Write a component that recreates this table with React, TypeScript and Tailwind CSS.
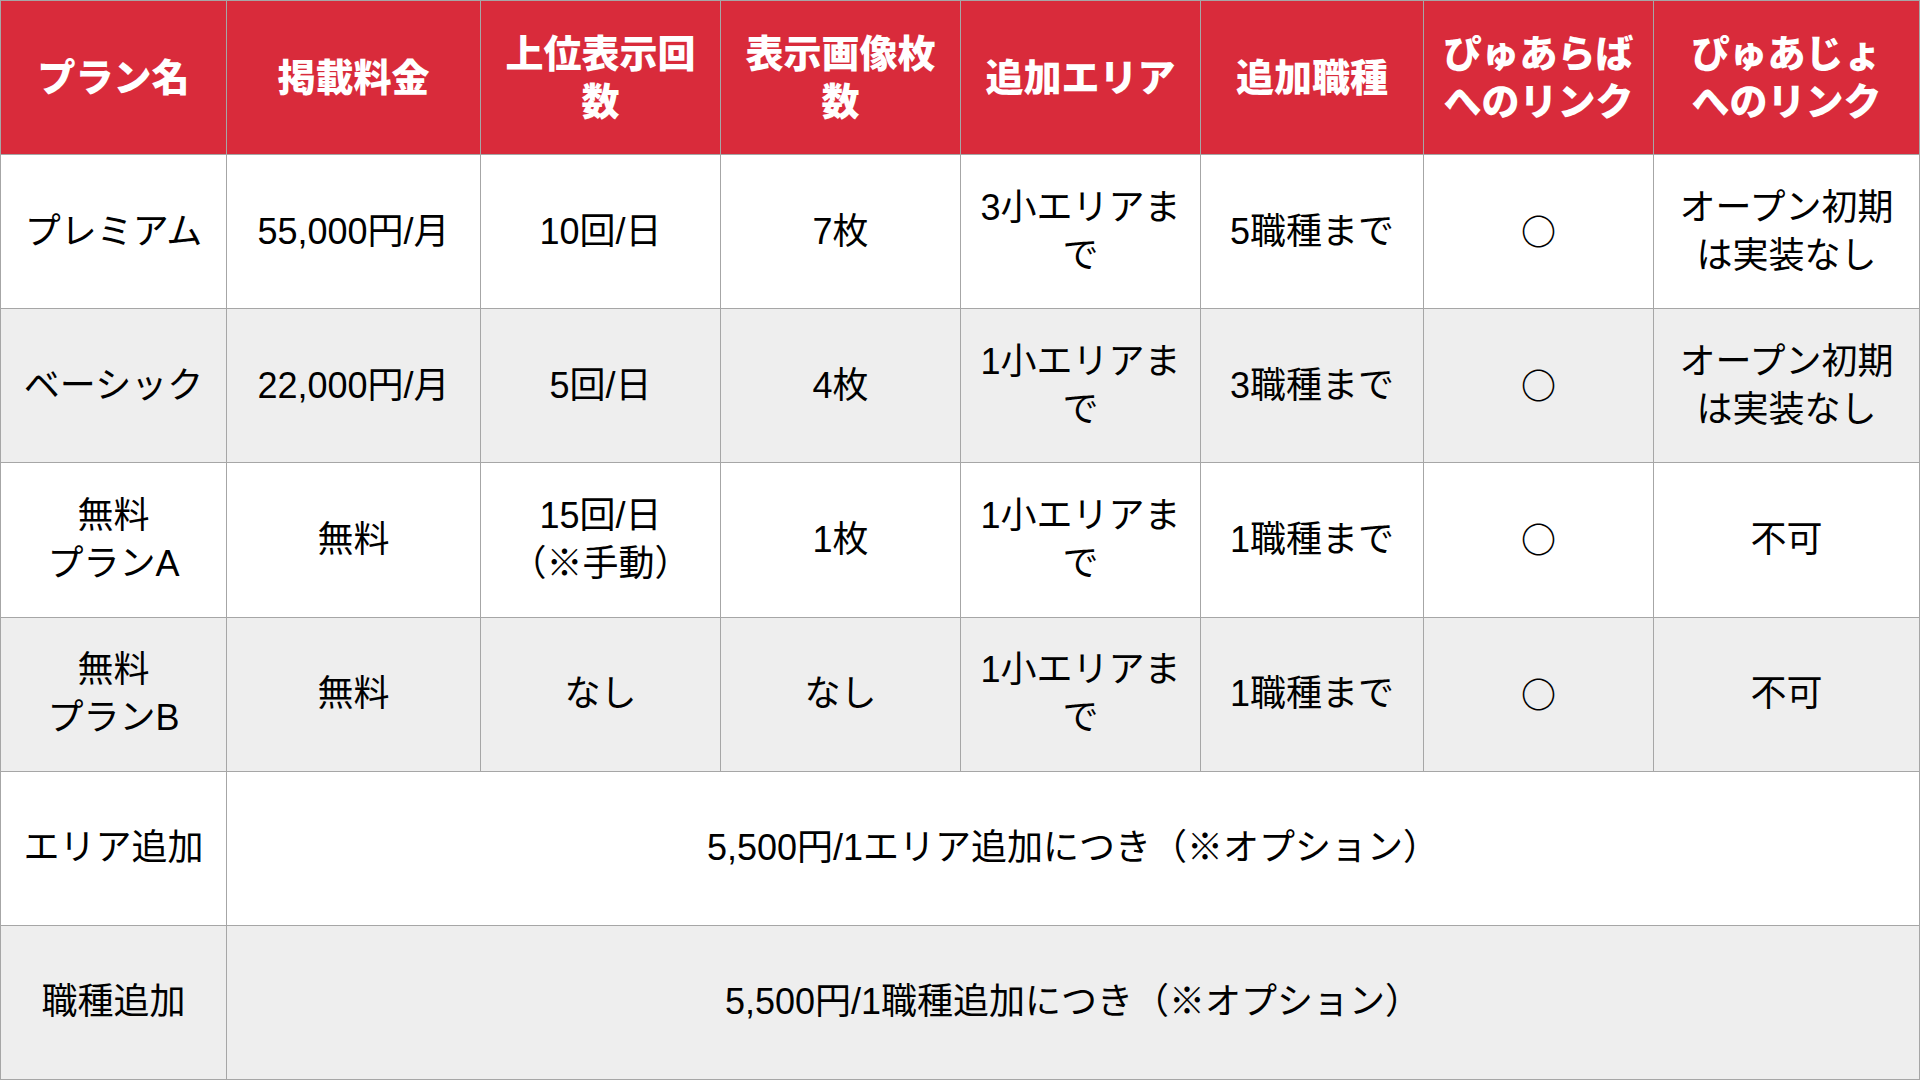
import React from "react";

const font = { fontFamily: '"Liberation Sans", "Noto Sans CJK JP", sans-serif' };

type Row = { cells: React.ReactNode[]; alt: boolean };

const br = (a: string, b: string) => (
  <>
    {a}
    <br />
    {b}
  </>
);

const Circle = () => (
  <span className="font-['Noto_Sans_CJK_JP',sans-serif] font-bold text-[35px]">○</span>
);

const headers: React.ReactNode[] = [
  "プラン名",
  "掲載料金",
  br("上位表示回", "数"),
  br("表示画像枚", "数"),
  "追加エリア",
  "追加職種",
  br("ぴゅあらば", "へのリンク"),
  br("ぴゅあじょ", "へのリンク"),
];

const rows: Row[] = [
  {
    alt: false,
    cells: ["プレミアム", "55,000円/月", "10回/日", "7枚", br("3小エリアま", "で"), "5職種まで", <Circle />, br("オープン初期", "は実装なし")],
  },
  {
    alt: true,
    cells: ["ベーシック", "22,000円/月", "5回/日", "4枚", br("1小エリアま", "で"), "3職種まで", <Circle />, br("オープン初期", "は実装なし")],
  },
  {
    alt: false,
    cells: [br("無料", "プランA"), "無料", br("15回/日", "（※手動）"), "1枚", br("1小エリアま", "で"), "1職種まで", <Circle />, "不可"],
  },
  {
    alt: true,
    cells: [br("無料", "プランB"), "無料", "なし", "なし", br("1小エリアま", "で"), "1職種まで", <Circle />, "不可"],
  },
];

export default function App() {
  return (
    <div
      className="w-[1920px] h-[1080px] grid grid-cols-[226px_254px_240px_240px_240px_223px_230px_1fr] grid-rows-[repeat(7,1fr)] border-l border-t border-[#a6a6a6] text-black"
      style={font}
    >
      {headers.map((h, i) => (
        <div
          key={"h" + i}
          className="bg-[#d92b3b] text-white font-black text-[38px] leading-[48px] flex items-center justify-center text-center border-r border-b border-[#a6a6a6]"
        >
          <div>{h}</div>
        </div>
      ))}
      {rows.map((r, ri) =>
        r.cells.map((c, ci) => (
          <div
            key={"r" + ri + "c" + ci}
            className={
              "flex items-center justify-center text-center text-[36px] leading-[48px] border-r border-b border-[#a6a6a6] " +
              (r.alt ? "bg-[#eeeeee]" : "bg-white")
            }
          >
            <div>{c}</div>
          </div>
        ))
      )}
      <div className="flex items-center justify-center text-center text-[36px] leading-[48px] border-r border-b border-[#a6a6a6] bg-white">
        エリア追加
      </div>
      <div className="col-span-7 flex items-center justify-center text-center text-[36px] leading-[48px] border-r border-b border-[#a6a6a6] bg-white">
        5,500円/1エリア追加につき（※オプション）
      </div>
      <div className="flex items-center justify-center text-center text-[36px] leading-[48px] border-r border-b border-[#a6a6a6] bg-[#eeeeee]">
        職種追加
      </div>
      <div className="col-span-7 flex items-center justify-center text-center text-[36px] leading-[48px] border-r border-b border-[#a6a6a6] bg-[#eeeeee]">
        5,500円/1職種追加につき（※オプション）
      </div>
    </div>
  );
}
